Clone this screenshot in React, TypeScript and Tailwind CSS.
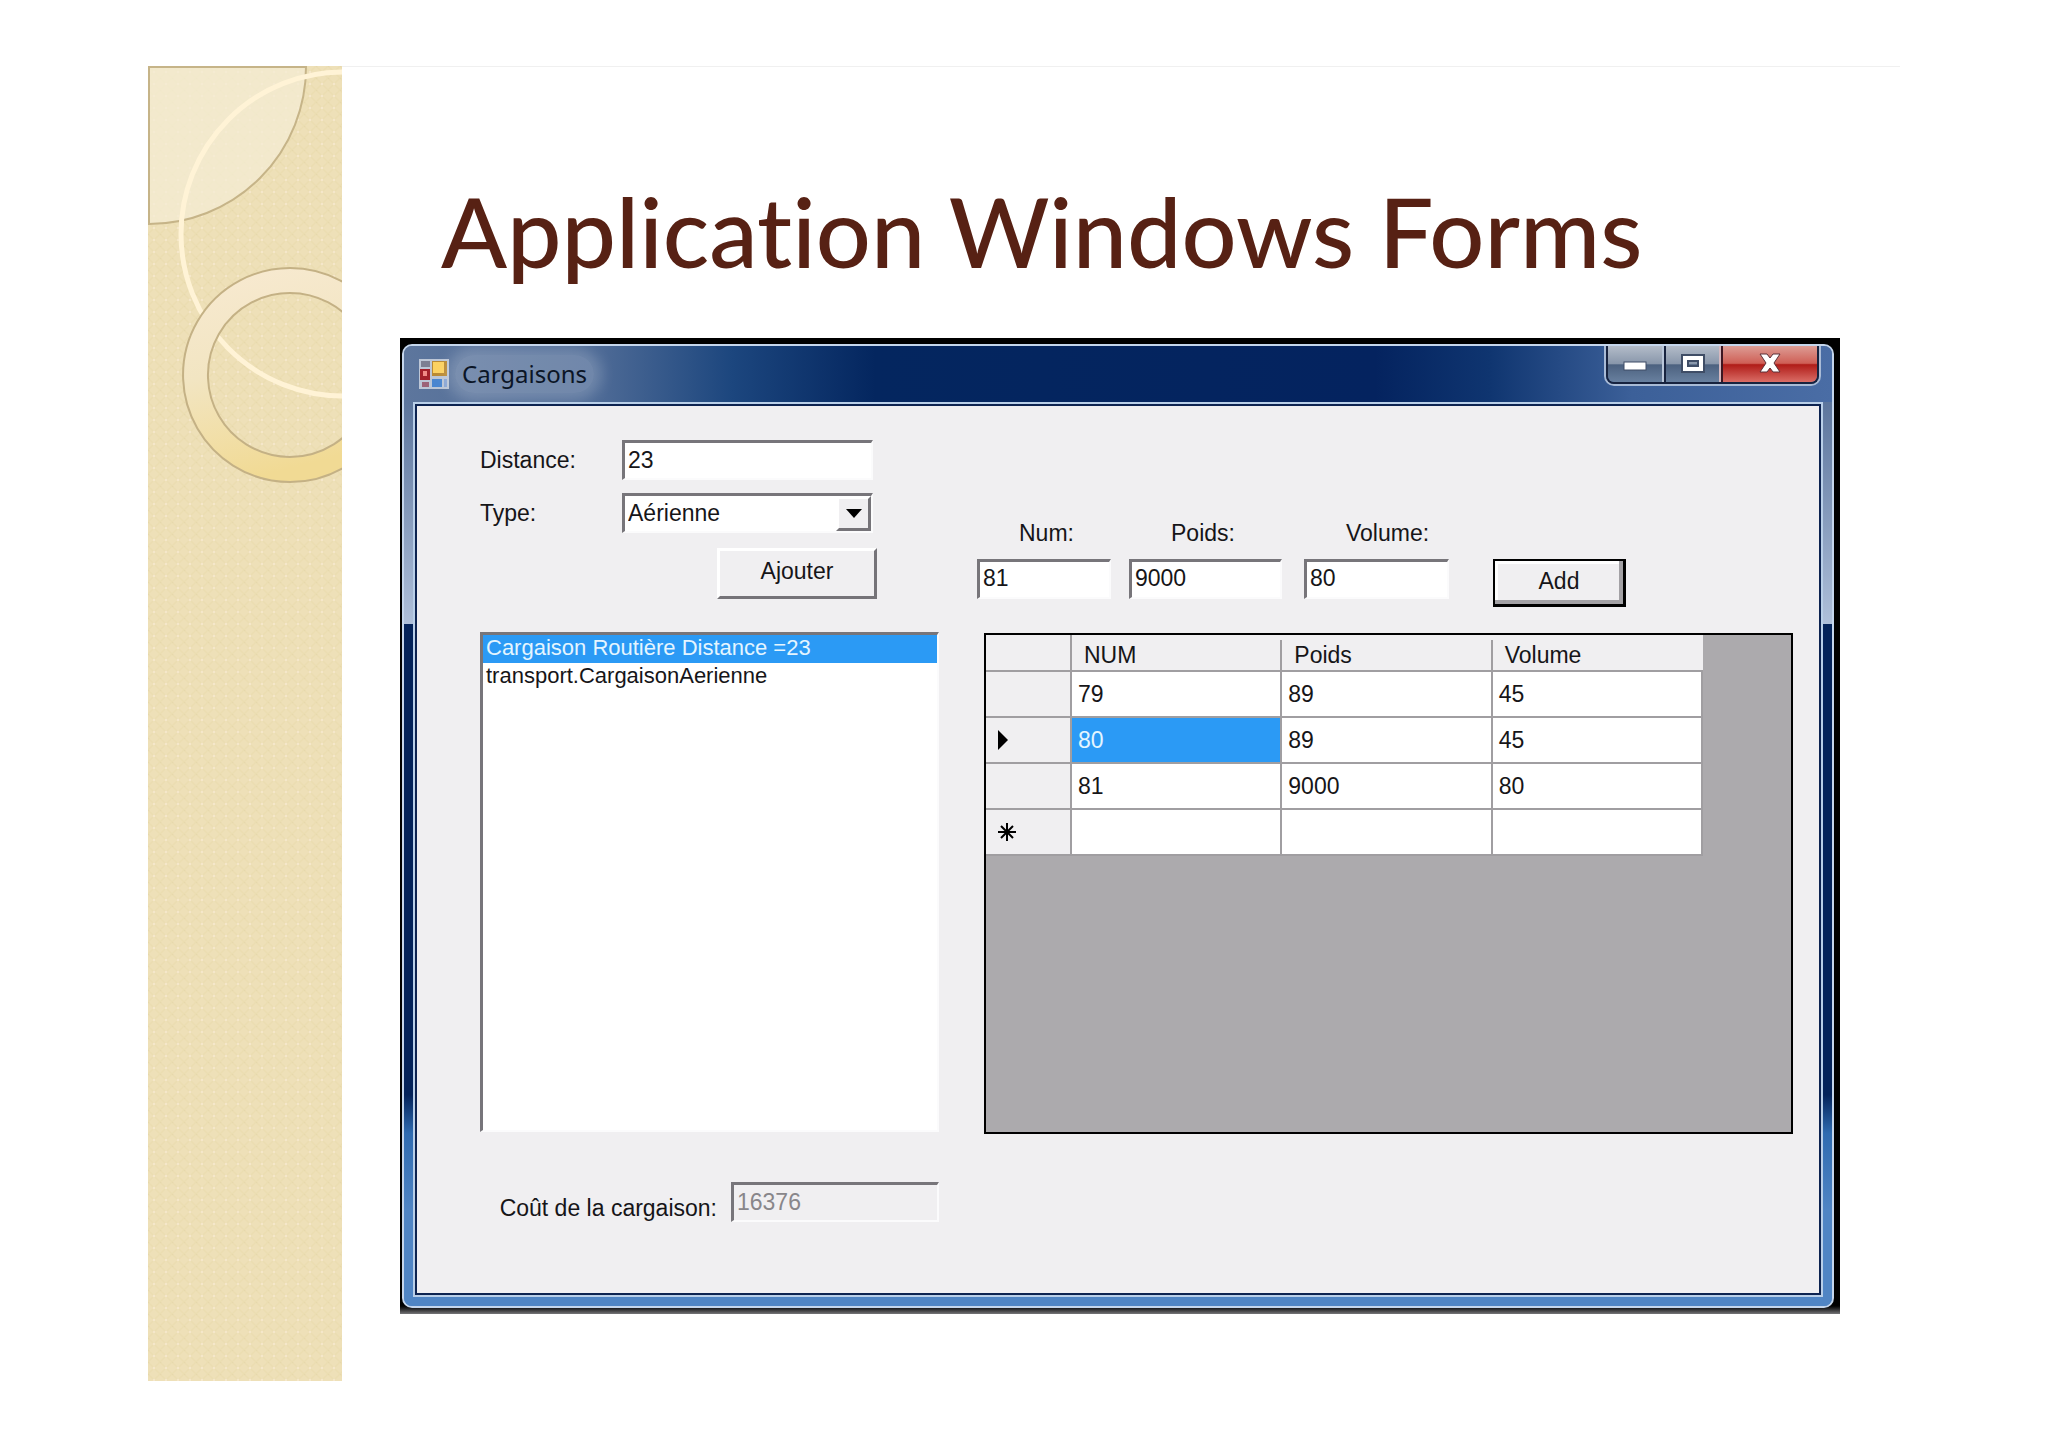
import { useState } from 'react'
import type { ReactNode } from 'react'

const SUNKEN = 'border-t-[3px] border-l-[3px] border-r-2 border-b-2 border-t-[#77757a] border-l-[#77757a] border-r-[#fbfbfc] border-b-[#fbfbfc]'
const RAISED = 'border-t-[3px] border-l-[3px] border-r-[3px] border-b-[3px] border-t-white border-l-white border-r-[#757378] border-b-[#757378]'

const routes = ['Cargaison Routière Distance =23', 'transport.CargaisonAerienne']

const rows = [
  { num: '79', poids: '89', volume: '45' },
  { num: '80', poids: '89', volume: '45' },
  { num: '81', poids: '9000', volume: '80' },
  { num: '', poids: '', volume: '' },
]

function SideArt() {
  return (
    <aside className="w-[194px] shrink-0 overflow-hidden bg-[#eee0b8]">
      <svg className="block h-full w-full" aria-hidden="true">
        <defs>
          <pattern id="weave" width="12" height="12" patternUnits="userSpaceOnUse">
            <path d="M0 0L12 12M12 0L0 12" stroke="#e8d9aa" strokeWidth="1.5" opacity="0.5" />
            <circle cx="6" cy="6" r="1.3" fill="#f5e7ca" />
            <circle cx="0" cy="0" r="1.3" fill="#e6d8ac" />
          </pattern>
          <linearGradient id="ring" x1="0" y1="0" x2="0.25" y2="1">
            <stop offset="0" stopColor="#f8ead2" />
            <stop offset="0.5" stopColor="#f2e5c2" />
            <stop offset="1" stopColor="#f1da94" />
          </linearGradient>
        </defs>
        <rect width="100%" height="100%" fill="url(#weave)" />
        <path d="M1 1H158A157 157 0 0 1 1 158Z" fill="#f4ecd4" fillOpacity="0.75" stroke="#c6b488" strokeWidth="2" />
        <circle cx="195" cy="168" r="162" fill="none" stroke="#fff3d6" strokeWidth="5" />
        <path
          d="M142 202a107 107 0 1 0 0.1 0ZM142 227a82 82 0 1 1 -0.1 0Z"
          fill="url(#ring)"
          fillRule="evenodd"
          stroke="#c4b185"
          strokeWidth="2"
        />
      </svg>
    </aside>
  )
}

function FormIcon() {
  return (
    <svg width="30" height="30" viewBox="0 0 30 30" aria-hidden="true">
      <rect width="30" height="30" fill="#bcc6d6" />
      <rect x="2" y="2" width="9" height="6" fill="#7c7f92" />
      <rect x="1" y="10" width="10" height="11" fill="#a3202a" />
      <rect x="4" y="12" width="4" height="5" fill="#f08a86" />
      <rect x="13" y="2" width="15" height="15" fill="#b98a34" />
      <rect x="14" y="3" width="11" height="11" fill="#fbd262" />
      <rect x="3" y="23" width="7" height="5" fill="#9c6378" />
      <rect x="13" y="20" width="10" height="8" fill="#4a86d0" />
      <rect x="25" y="20" width="3" height="8" fill="#8aa6d4" />
    </svg>
  )
}

function TitleBar() {
  return (
    <header className="flex h-[56px] items-start justify-between pl-[15px] pr-[11px]">
      <div className="flex items-center gap-[6px] pt-[9px]">
        <FormIcon />
        <h2 className="rounded-full bg-white/20 px-[7px] font-['Noto_Sans','Open_Sans',sans-serif] text-[24px] leading-[38px] text-[#0b1526] shadow-[0_0_14px_8px_rgba(255,255,255,0.2)]">
          Cargaisons
        </h2>
      </div>
      <div className="rounded-b-[10px] border-2 border-t-0 border-[#a9bbd6]">
        <div className="flex h-[38px] overflow-hidden rounded-b-[8px] border-2 border-t-0 border-[#17233f]">
          <button type="button" aria-label="Réduire" className="flex w-[56px] items-center justify-center border-r-2 border-[#b9c6d9] bg-[linear-gradient(to_bottom,#b3bcc9,#8896aa_50%,#4c617f_52%,#68809f)]">
            <svg width="26" height="24" aria-hidden="true"><rect x="2" y="10" width="22" height="8" fill="#fff" stroke="#3f4d66" /></svg>
          </button>
          <button type="button" aria-label="Agrandir" className="flex w-[57px] items-center justify-center border-r-2 border-l-2 border-r-[#d5b9c0] border-l-[#17233f] bg-[linear-gradient(to_bottom,#b3bcc9,#8896aa_50%,#4c617f_52%,#68809f)]">
            <svg width="26" height="24" aria-hidden="true">
              <path fillRule="evenodd" d="M2 3H24V20H2ZM8 9V14H18V9Z" fill="#fff" stroke="#3f4d66" strokeWidth="2" />
            </svg>
          </button>
          <button type="button" aria-label="Fermer" className="flex w-[96px] items-center justify-center border-l-2 border-[#3d1722] bg-[linear-gradient(to_bottom,#dd9d95,#cf5f56_48%,#b01c18_52%,#da6d66)]">
            <svg width="24" height="24" aria-hidden="true">
              <path d="M2 2H9L12 6L15 2H22L16 11L22 20H15L12 16L9 20H2L8 11Z" fill="#fff" stroke="#5a3038" />
            </svg>
          </button>
        </div>
      </div>
    </header>
  )
}

function Field({ id, label, value, className }: { id: string; label: string; value: string; className: string }) {
  return (
    <div className={`flex flex-col gap-[12px] ${className}`}>
      <label htmlFor={id} className="pl-[42px] leading-[28px]">{label}</label>
      <input id={id} defaultValue={value} className={`h-[40px] w-full bg-white pb-[2px] pl-[3px] ${SUNKEN}`} />
    </div>
  )
}

function RowMarker({ index }: { index: number }) {
  if (index === 1) {
    return <svg width="12" height="20" aria-hidden="true"><path d="M1 0L11 10L1 20Z" fill="#000" /></svg>
  }
  if (index === 3) {
    return (
      <svg width="20" height="20" aria-hidden="true">
        <path d="M10 1V19M1 10H19M4 4L16 16M16 4L4 16" stroke="#000" strokeWidth="2" />
      </svg>
    )
  }
  return null
}

function Cell({ selected, children }: { selected?: boolean; children: ReactNode }) {
  return (
    <td className={`border-r-2 border-b-2 border-[#a09ea1] pl-[6px] ${selected ? 'bg-[#2b9af5] text-[#e4f5ff]' : 'bg-white'}`}>
      {children}
    </td>
  )
}

function CargoGrid() {
  return (
    <div className="ml-[7px] flex-1 border-2 border-black bg-[#acaaad]">
      <table className="w-[717px] table-fixed border-separate border-spacing-0">
        <colgroup>
          <col className="w-[86px]" />
          <col />
          <col />
          <col />
        </colgroup>
        <thead>
          <tr className="h-[37px] bg-[#f0eff1] text-left">
            <th aria-label="Ligne" className="border-r-2 border-b-2 border-[#a09ea1]" />
            {['NUM', 'Poids', 'Volume'].map((name) => (
              <th key={name} className="group border-b-2 border-[#a09ea1] p-0 font-normal">
                <div className="mt-[5px] border-r-2 border-[#a09ea1] pl-[12px] leading-[30px] group-last:border-transparent">{name}</div>
              </th>
            ))}
          </tr>
        </thead>
        <tbody>
          {rows.map((row, i) => (
            <tr key={i} className="h-[46px]">
              <th className="border-r-2 border-b-2 border-[#a09ea1] bg-[#f0eff1] pl-[11px]"><RowMarker index={i} /></th>
              <Cell selected={i === 1}>{row.num}</Cell>
              <Cell>{row.poids}</Cell>
              <Cell>{row.volume}</Cell>
            </tr>
          ))}
        </tbody>
      </table>
    </div>
  )
}

function CargoForm() {
  const [route, setRoute] = useState(routes[0])

  return (
    <form onSubmit={(e) => e.preventDefault()} className="flex flex-1 gap-[38px] bg-[#f0eff1] pt-[34px] pr-[26px] pl-[63px]">
      <div className="flex w-[459px] shrink-0 flex-col">
        <div className="flex items-center">
          <label htmlFor="distance" className="w-[142px]">Distance:</label>
          <input id="distance" defaultValue="23" className={`h-[40px] w-[251px] bg-white pl-[3px] ${SUNKEN}`} />
        </div>
        <div className="mt-[13px] flex items-center">
          <label htmlFor="type" className="w-[142px]">Type:</label>
          <div className="relative w-[251px]">
            <select id="type" className={`block h-[40px] w-full appearance-none bg-white pl-[3px] ${SUNKEN}`}>
              <option>Aérienne</option>
              <option>Routière</option>
            </select>
            <span className={`pointer-events-none absolute top-[3px] right-[2px] bottom-[2px] flex w-[35px] items-center justify-center bg-[#f0eff1] ${RAISED}`}>
              <svg width="16" height="9" aria-hidden="true"><path d="M0 0H16L8 9Z" fill="#000" /></svg>
            </span>
          </div>
        </div>
        <button type="button" className={`mt-[15px] ml-[237px] h-[51px] w-[160px] bg-[#f0eff1] pb-[4px] ${RAISED}`}>Ajouter</button>
        <select
          size={2}
          aria-label="Cargaisons"
          value={route}
          onChange={(e) => setRoute(e.target.value)}
          className={`mt-[33px] flex-1 appearance-none overflow-hidden bg-white text-[22px] ${SUNKEN}`}
        >
          {routes.map((name) => (
            <option key={name} className="h-[28px] px-[3px] py-0 leading-[28px] checked:bg-[#2b9af5] checked:bg-linear-to-r checked:from-[#2b9af5] checked:to-[#2b9af5] checked:text-[#e4f5ff]">
              {name}
            </option>
          ))}
        </select>
        <div className="mt-[50px] mb-[71px] flex items-start justify-end gap-[14px]">
          <label htmlFor="cost" className="pt-[12px] leading-[28px]">Coût de la cargaison:</label>
          <input id="cost" disabled defaultValue="16376" className={`h-[40px] w-[208px] bg-[#f0eff1] pl-[3px] text-[#88868a] ${SUNKEN}`} />
        </div>
      </div>
      <div className="flex flex-1 flex-col pt-[79px] pb-[159px]">
        <div className="mb-[26px] flex items-start">
          <Field id="num" label="Num:" value="81" className="w-[134px]" />
          <Field id="poids" label="Poids:" value="9000" className="ml-[18px] w-[153px]" />
          <Field id="volume" label="Volume:" value="80" className="ml-[22px] w-[145px]" />
          <button type="submit" className="mt-[40px] ml-[44px] h-[48px] w-[133px] border-2 border-r-[3px] border-b-[3px] border-black bg-[#f0eff1] pb-[2px] shadow-[inset_-4px_-4px_0_#a3a1a5,inset_3px_3px_0_#fff]">
            Add
          </button>
        </div>
        <CargoGrid />
      </div>
    </form>
  )
}

export default function App() {
  return (
    <div className="flex min-h-screen bg-white px-[148px] py-[66px] font-['Liberation_Sans',Arial,sans-serif] text-[23px] text-[#161518]">
      <SideArt />
      <main className="flex flex-1 flex-col border-t border-[#f0f0f0] pr-[60px] pb-[67px] pl-[58px]">
        <h1 className="h-[271px] pt-[104px] pl-[41px] font-[Lato,sans-serif] text-[97px] leading-[120px] font-medium whitespace-nowrap text-[#572114] [font-variant-ligatures:none]">
          Application Windows Forms
        </h1>
        <section aria-label="Cargaisons" className="flex flex-1 flex-col bg-linear-to-b from-black from-99% to-[#77777a] to-100% pt-[6px] pr-[6px] pb-[6px] pl-[2px]">
          <div className="flex flex-1 flex-col rounded-[10px] border-2 border-[#c5d6ec] bg-linear-to-b from-[#5d769d] from-6% via-[#afc0da] via-29% to-[#4f84c4] to-100% overflow-hidden">
            <div className="flex flex-1 flex-col bg-[linear-gradient(to_bottom,transparent_29%,#04235a_29%,#04235a_78%,#2f6bb0_82%,#5085c4_90%)]">
              <div className="bg-[linear-gradient(to_right,#5d769d_0%,#4c6995_14%,#1c467e_23%,#04265f_33%,#04235f_68%,#0f3570_76%,#3c6099_86%,#4a6da5_100%)]">
                <TitleBar />
              </div>
              <div className="mx-[9px] mb-[9px] flex flex-1 flex-col border-2 border-[#b9cfe8]">
                <div className="flex flex-1 flex-col border-2 border-[#0d2350]">
                  <CargoForm />
                </div>
              </div>
            </div>
          </div>
        </section>
      </main>
    </div>
  )
}
